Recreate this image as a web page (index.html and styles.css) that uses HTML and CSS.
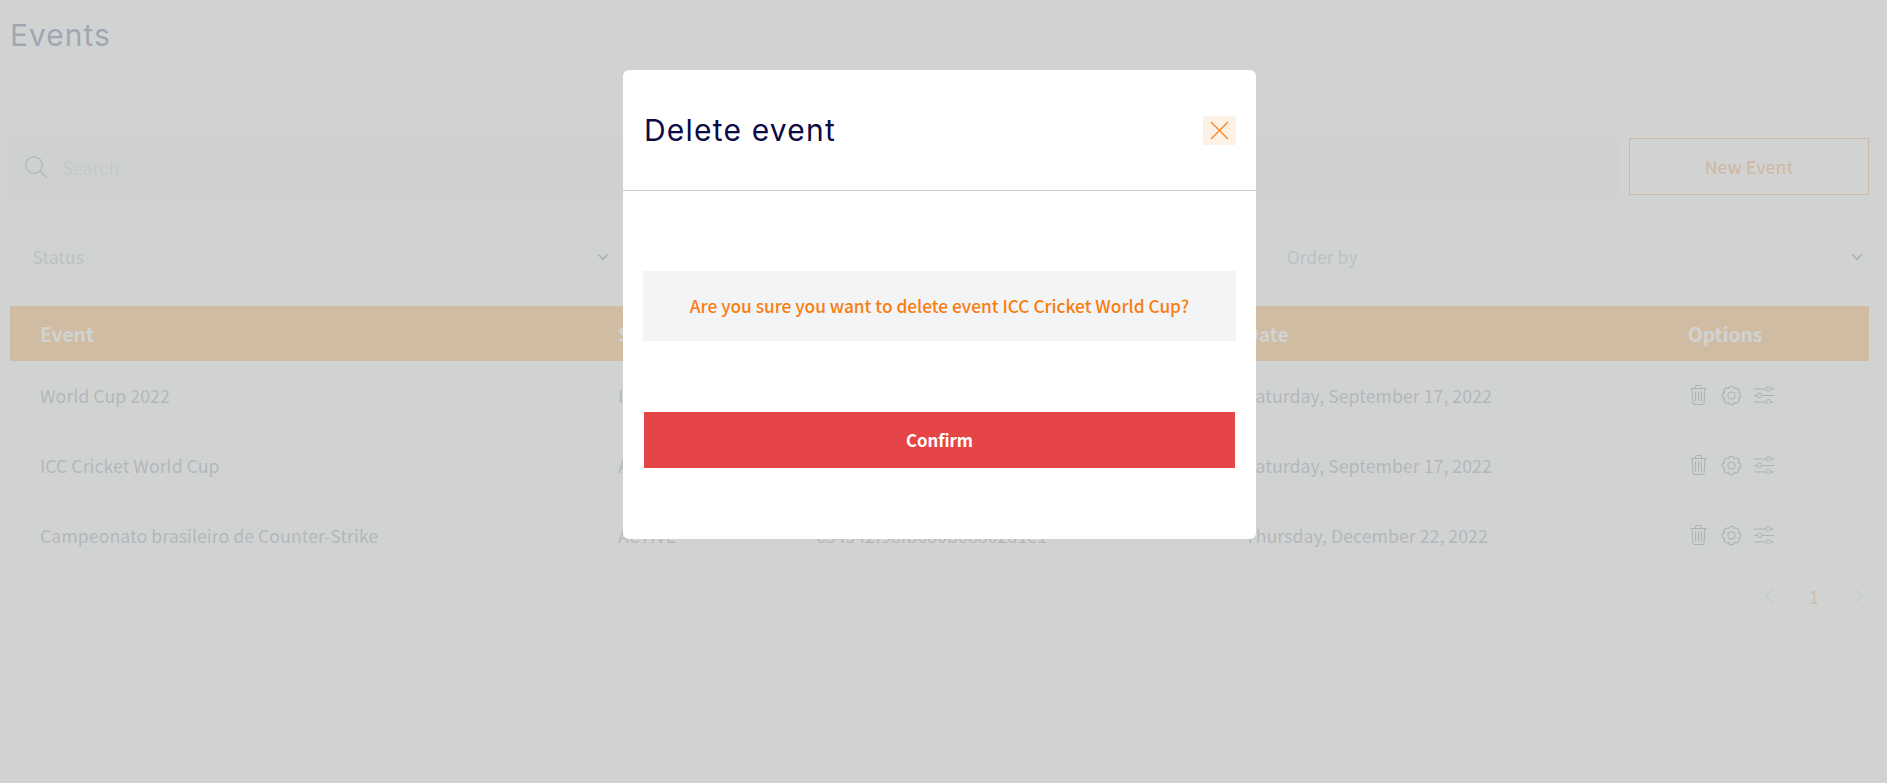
FILE: index.html
```html
<!DOCTYPE html>
<html lang="en">
<head>
    <meta charset="UTF-8">
    <title>Events</title>
    <link rel="stylesheet" href="styles.css">
</head>
<body>
<svg class="defs" width="0" height="0">
    <symbol id="i-trash" viewBox="0 0 17 20"><path d="M.5 3.5h16M5.5 3.5V1.2c0-.4.3-.7.7-.7h4.600c.4 0 .7.3.7.7v2.300M2 3.500l1 14.800c0 .7.5 1.200 1.200 1.200h8.600c.7 0 1.200-.5 1.200-1.200l1-14.800M5.600 6.500v10M8.500 6.500v10M11.400 6.500v10"/></symbol>
    <symbol id="i-gear" viewBox="0 0 24 24"><path d="M18.650 9.240A2.800 2.800 0 0 1 18.650 14.760A2.800 2.800 0 0 1 14.760 18.650A2.800 2.800 0 0 1 9.240 18.650A2.800 2.800 0 0 1 5.350 14.760A2.800 2.800 0 0 1 5.350 9.240A2.800 2.800 0 0 1 9.240 5.350A2.800 2.800 0 0 1 14.760 5.350A2.800 2.800 0 0 1 18.650 9.240Z"/><circle cx="12" cy="12" r="3.400"/></symbol>
    <symbol id="i-sliders" viewBox="0 0 20 18"><path d="M0 3h12M16.500 3H20M0 9.500h3.200M7.800 9.500H20M0 16h12M16.500 16H20"/><circle cx="14.300" cy="2.800" r="2.300"/><circle cx="5.500" cy="9.300" r="2.300"/><circle cx="14.300" cy="15.800" r="2.300"/></symbol>
    <symbol id="i-chev" viewBox="0 0 12 12"><path d="M1.500 3.500 6 8.500l4.500-5"/></symbol>
</svg>

<div class="page">
    <h1 class="page-title">Events</h1>

    <div class="toolbar">
        <div class="search">
            <svg class="search-icon" viewBox="0 0 20 20"><circle cx="8.200" cy="8.200" r="7.500"/><path d="M13.600 13.600 19.500 19.500"/></svg>
            <span class="search-text">Search</span>
        </div>
        <button class="btn-new">New Event</button>
    </div>

    <div class="filters">
        <div class="select">Status<svg class="chev"><use href="#i-chev"/></svg></div>
        <div class="select">Type<svg class="chev"><use href="#i-chev"/></svg></div>
        <div class="select">Order by<svg class="chev"><use href="#i-chev"/></svg></div>
    </div>

    <div class="table">
        <div class="row head">
            <div>Event</div><div>Status</div><div>ID</div><div>Date</div><div>Options</div>
        </div>
        <div class="row">
            <div>World Cup 2022</div><div>INACTIVE</div><div>632604d98fb080b08802a0c4</div><div>Saturday, September 17, 2022</div>
            <div class="opts"><svg class="ic ic-trash"><use href="#i-trash"/></svg><svg class="ic ic-gear"><use href="#i-gear"/></svg><svg class="ic ic-sliders"><use href="#i-sliders"/></svg></div>
        </div>
        <div class="row">
            <div>ICC Cricket World Cup</div><div>ACTIVE</div><div>632605118fb080b08802a0d2</div><div>Saturday, September 17, 2022</div>
            <div class="opts"><svg class="ic ic-trash"><use href="#i-trash"/></svg><svg class="ic ic-gear"><use href="#i-gear"/></svg><svg class="ic ic-sliders"><use href="#i-sliders"/></svg></div>
        </div>
        <div class="row">
            <div>Campeonato brasileiro de Counter-Strike</div><div>ACTIVE</div><div>634542f98fb080b08802a1e1</div><div>Thursday, December 22, 2022</div>
            <div class="opts"><svg class="ic ic-trash"><use href="#i-trash"/></svg><svg class="ic ic-gear"><use href="#i-gear"/></svg><svg class="ic ic-sliders"><use href="#i-sliders"/></svg></div>
        </div>
    </div>

    <div class="pager">
        <svg class="pager-arrow" viewBox="0 0 10 16"><path d="M9 1 1.500 8 9 15"/></svg>
        <span class="pager-num">1</span>
        <svg class="pager-arrow" viewBox="0 0 10 16"><path d="M1 1l7.500 7L1 15"/></svg>
    </div>
</div>

<div class="overlay">
    <div class="modal">
        <div class="modal-head">
            <h2 class="modal-title">Delete event</h2>
            <button class="modal-close"><svg viewBox="0 0 19 19"><path d="M1 1l17 17M18 1 1 18"/></svg></button>
        </div>
        <div class="modal-body">
            <p class="modal-msg">Are you sure you want to delete event ICC Cricket World Cup?</p>
            <button class="btn-confirm">Confirm</button>
        </div>
    </div>
</div>
</body>
</html>
```

FILE: styles.css
```css
* { box-sizing: border-box; }
html, body { margin: 0; height: 100%; }
body { background: #fff; color: #6b7280; font-family: "Noto Sans CJK SC", "Liberation Sans", sans-serif; font-size: 17.600px; overflow: hidden; }
.defs { position: absolute; }

.page { padding: 0 18px 0 10px; }
.page-title { margin: 0; height: 108px; padding-top: 14px; border-bottom: 1px solid #f6e3d0; font: 400 30px/42px Inter, sans-serif; letter-spacing: 1px; color: #14144f; }

.toolbar { display: flex; gap: 11px; align-items: flex-start; margin-top: 30px; }
.search { flex: 1; height: 60px; display: flex; align-items: center; gap: 15px; padding: 0 0 2px 14px; background: #f3f4f6; border: 1px solid #eeeff1; }
.search-icon { width: 22px; height: 22px; fill: none; stroke: #4b5563; stroke-width: 1; }
.search-text { color: #c2c6cc; font-size: 18px; }
.btn-new { width: 240px; height: 57px; background: #fff; border: 1px solid #f58014; color: #f58014; font: 500 17.500px "Noto Sans CJK SC", sans-serif; }

.filters { display: grid; grid-template-columns: repeat(3, 1fr); gap: 22px; margin-top: 30px; }
.select { height: 57px; display: flex; align-items: center; justify-content: space-between; padding: 0 5px 0 21.500px; border: 1px solid #eeeff1; color: #9ca3af; }
.chev { width: 12px; height: 12px; fill: none; stroke: #374151; stroke-width: 1.400; }

.table { margin-top: 21px; }
.row { display: grid; grid-template-columns: 578px 198px 429px 443px 1fr; height: 70px; padding-bottom: 2px; align-items: center; font-size: 17.800px; }
.row > div { padding-left: 30px; white-space: nowrap; }
.row.head { height: 55px; padding-bottom: 0; background: #f58a12; color: #fff; font-size: 19.200px; font-weight: 700; }
.opts { display: flex; align-items: center; }
.ic { fill: none; stroke: #4b5563; stroke-width: 1; }
.ic-trash { width: 17px; height: 20px; margin-left: 2px; }
.ic-gear { width: 25px; height: 25px; margin-left: 12px; }
.ic-sliders { width: 20px; height: 18px; margin-left: 10px; }

.pager { display: flex; justify-content: flex-end; align-items: center; gap: 35px; margin-top: 12px; padding-right: 5px; }
.pager-arrow { width: 10px; height: 16px; fill: none; stroke: #d1d5db; stroke-width: 1.500; }
.pager-num { width: 10px; color: #f58a12; font-size: 18px; }

.overlay { position: fixed; inset: 0; display: flex; justify-content: center; align-items: flex-start; padding: 70px 8px 0 0; background: rgba(197, 200, 200, .8); }
.modal { width: 633px; height: 469px; background: #fff; border-radius: 6px; }
.modal-head { height: 121px; display: flex; justify-content: space-between; align-items: center; padding: 0 20px 0 21px; border-bottom: 1px solid #c8c8c8; }
.modal-title { margin: 0; font: 400 30px/40px Inter, sans-serif; color: #0b0b45; letter-spacing: 1.200px; }
.modal-close { width: 33px; height: 29px; padding: 0; display: flex; align-items: center; justify-content: center; background: #fdf1e5; border: 0; border-radius: 2px; }
.modal-close svg { width: 19px; height: 19px; fill: none; stroke: #f97d16; stroke-width: 1.100; }
.modal-body { padding: 80px 20px 0 20px; }
.modal-msg { margin: 0; height: 70px; line-height: 69px; text-align: center; background: #f3f4f6; color: #f97d10; font-size: 17.300px; font-weight: 500; }
.btn-confirm { display: block; width: 591px; height: 56px; margin: 71px 0 0 1px; background: #e64548; border: 0; color: #fff; font: 700 16.800px "Noto Sans CJK SC", sans-serif; }
```
